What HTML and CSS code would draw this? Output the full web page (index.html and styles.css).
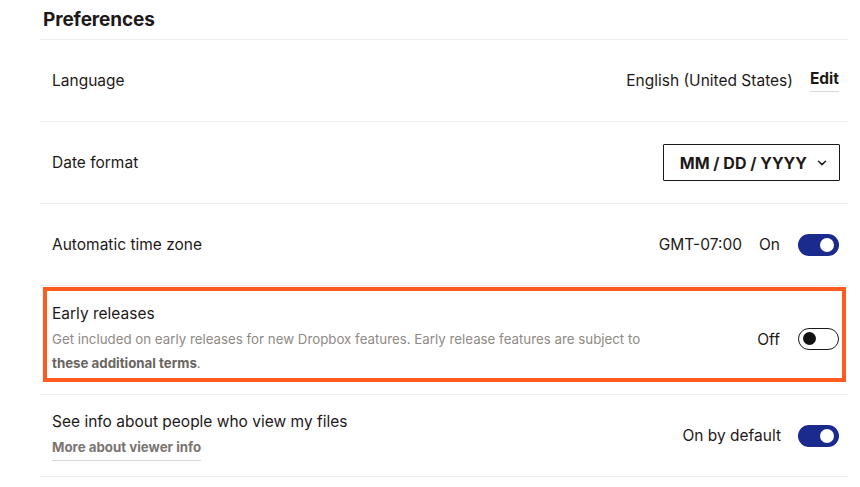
FILE: index.html
```html
<!DOCTYPE html>
<html lang="en">
<head>
<meta charset="utf-8">
<title>Preferences</title>
<link rel="stylesheet" href="styles.css">
</head>
<body>
<section class="prefs">
  <h2 class="prefs-title">Preferences</h2>

  <div class="row">
    <div class="label">Language</div>
    <div class="controls">
      <span class="value">English (United States)</span>
      <a class="edit" href="#">Edit</a>
    </div>
  </div>

  <div class="row">
    <div class="label">Date format</div>
    <div class="controls">
      <button class="select" type="button">MM / DD / YYYY
        <svg class="chev" width="10" height="6" viewBox="0 0 10 6"><path d="M1.5 1.2 L5 4.6 L8.5 1.2" fill="none" stroke="#1e1919" stroke-width="1.5" stroke-linecap="round" stroke-linejoin="round"/></svg>
      </button>
    </div>
  </div>

  <div class="row">
    <div class="label">Automatic time zone</div>
    <div class="controls">
      <span class="value">GMT-07:00</span>
      <span class="state">On</span>
      <span class="toggle on"><span class="knob"></span></span>
    </div>
  </div>

  <div class="row row-early">
    <div class="highlight">
      <div class="text">
        <div class="label">Early releases</div>
        <div class="desc">Get included on early releases for new Dropbox features. Early release features are subject to <a class="terms" href="#">these additional terms</a>.</div>
      </div>
      <div class="controls">
        <span class="state">Off</span>
        <span class="toggle off"><span class="knob"></span></span>
      </div>
    </div>
  </div>

  <div class="row">
    <div class="text">
      <div class="label">See info about people who view my files</div>
      <a class="more" href="#">More about viewer info</a>
    </div>
    <div class="controls">
      <span class="value">On by default</span>
      <span class="toggle on"><span class="knob"></span></span>
    </div>
  </div>
</section>
</body>
</html>
```

FILE: styles.css
```css
* { box-sizing: border-box; }

html, body {
  margin: 0;
  padding: 0;
  background: #ffffff;
}

body {
  font-family: "Inter", "Liberation Sans", sans-serif;
  color: #1e1919;
  font-size: 15.5px;
}

.prefs {
  width: 808px;
  margin-left: 40px;
}

.prefs-title {
  margin: 0;
  height: 40px;
  padding: 8px 0 0 3px;
  font-size: 19px;
  font-weight: 700;
  line-height: 24px;
  letter-spacing: -0.1px;
  border-bottom: 1px solid #efedeb;
}

.row {
  display: flex;
  align-items: center;
  justify-content: space-between;
  height: 82px;
  padding: 0 9px 0 12px;
  border-bottom: 1px solid #efedeb;
}

.label {
  font-size: 15.5px;
  line-height: 22px;
  color: #1e1919;
}

.controls {
  display: flex;
  align-items: center;
  flex-shrink: 0;
}

.value {
  font-size: 15.5px;
  color: #1e1919;
  margin-right: 17px;
}

.state {
  font-size: 15.5px;
  color: #1e1919;
  margin-right: 18px;
}

.edit {
  font-size: 15.5px;
  font-weight: 700;
  color: #1e1919;
  text-decoration: none;
  padding-bottom: 2px;
  border-bottom: 1.5px solid #dcd8d4;
  line-height: 20px;
}

.select {
  display: flex;
  align-items: center;
  gap: 10px;
  height: 37px;
  padding: 0 12px 0 16px;
  border: 1.5px solid #1e1919;
  border-radius: 1px;
  background: #fff;
  font-family: inherit;
  font-size: 16px;
  font-weight: 700;
  color: #1e1919;
  margin-right: -1px;
}

.chev { display: block; margin-top: 1px; }

.toggle {
  position: relative;
  display: inline-block;
  width: 41px;
  height: 22px;
  border-radius: 11px;
}

.toggle.on {
  background: #1b2a8d;
}

.toggle.on .knob {
  position: absolute;
  top: 4px;
  right: 5px;
  width: 14px;
  height: 14px;
  border-radius: 50%;
  background: #fff;
}

.toggle.off {
  background: #fff;
  border: 1.5px solid #1e1919;
}

.toggle.off .knob {
  position: absolute;
  top: 3px;
  left: 4px;
  width: 13px;
  height: 13px;
  border-radius: 50%;
  background: #111;
}

.row-early {
  height: 109px;
  padding: 1px 2px 12px 3px;
  align-items: stretch;
}

.highlight {
  flex: 1;
  display: flex;
  align-items: center;
  justify-content: space-between;
  border: 4px solid #ff5a1f;
  padding: 10px 3px 1px 5px;
}

.text {
  display: flex;
  flex-direction: column;
  align-items: flex-start;
}

.desc {
  font-size: 13.3px;
  line-height: 24px;
  color: #8f8a86;
  width: 610px;
  margin-top: 2px;
}

.terms {
  font-weight: 700;
  color: #6a6561;
  text-decoration: none;
}

.more {
  font-size: 13.3px;
  font-weight: 700;
  color: #7a7571;
  text-decoration: none;
  line-height: 22px;
  padding-bottom: 2px;
  border-bottom: 1.5px solid #dcd8d4;
  margin-top: 3px;
}
```
